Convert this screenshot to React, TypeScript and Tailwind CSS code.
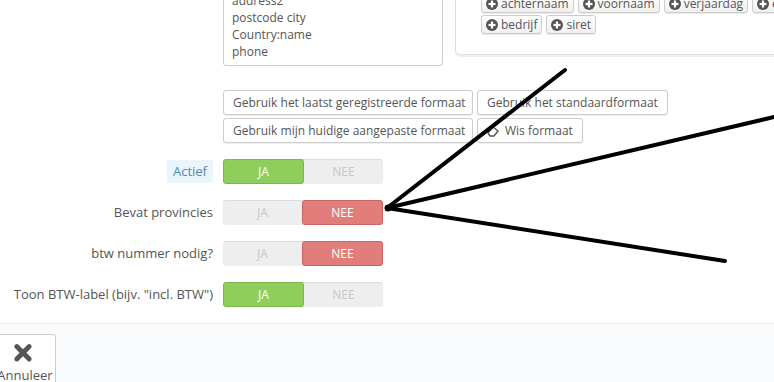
import React from "react";

const font = { fontFamily: '"Open Sans", "Liberation Sans", sans-serif' };

const PlusCircle = () => (
  <svg width="12" height="12" viewBox="0 0 12 12" className="shrink-0">
    <circle cx="6" cy="6" r="6" fill="#555" />
    <rect x="2.5" y="4.9" width="7" height="2.2" fill="#fff" />
    <rect x="4.9" y="2.5" width="2.2" height="7" fill="#fff" />
  </svg>
);

const Eraser = () => (
  <svg width="12" height="12" viewBox="0 0 12 12" className="shrink-0">
    <path d="M1 8 L6 2 L11 6 L7 11 L3 11 Z" fill="none" stroke="#555" strokeWidth="1.4" />
  </svg>
);

const SmallBtn = ({ label }: { label: string }) => (
  <div className="flex h-[19px] shrink-0 items-center gap-[3px] whitespace-nowrap rounded-[3px] border border-[#ccc] bg-gradient-to-b from-white to-[#f0f0f0] px-[4px] text-[12px] leading-none text-[#555] shadow-[0_1px_0_rgba(0,0,0,0.08)]">
    <PlusCircle />
    <span>{label}</span>
  </div>
);

const FormatBtn = ({ label, icon, wide }: { label: string; icon?: boolean; wide?: boolean }) => (
  <div
    className={`flex h-[25px] items-center gap-[6px] whitespace-nowrap rounded-[3px] border border-[#ccc] bg-white px-[9px] text-[12px] text-[#555] shadow-[0_1px_0_rgba(0,0,0,0.06)] ${
      wide ? "w-[250px]" : ""
    }`}
  >
    {icon && <Eraser />}
    <span>{label}</span>
  </div>
);

const Switch = ({ on }: { on: boolean }) => (
  <div className="flex h-[25px] w-[160px] rounded-[3px] bg-[#eeeeee] text-[12px] shadow-[inset_0_1px_1px_rgba(0,0,0,0.08)]">
    <div
      className={`flex flex-1 items-center justify-center rounded-[3px] ${
        on ? "border border-[#7ab848] bg-[#8fcd5d] text-white" : "text-[#c8c8c8]"
      }`}
    >
      JA
    </div>
    <div
      className={`flex flex-1 items-center justify-center rounded-[3px] ${
        !on ? "border border-[#c86464] bg-[#e17d7a] text-white" : "text-[#c8c8c8]"
      }`}
    >
      NEE
    </div>
  </div>
);

const rows = [
  { label: "Actief", on: true, badge: true },
  { label: "Bevat provincies", on: false },
  { label: "btw nummer nodig?", on: false },
  { label: 'Toon BTW-label (bijv. "incl. BTW")', on: true },
];

export default function App() {
  return (
    <div className="relative flex h-[382px] w-[774px] flex-col overflow-hidden bg-white" style={font}>
      <div className="flex h-[323px] shrink-0 flex-col">
        {/* address layout row */}
        <div className="-mt-[30px] ml-[223px] flex items-start gap-[12px]">
          <div className="h-[96px] w-[220px] shrink-0 rounded-[3px] border border-[#ccc] px-[8px] pt-[4px] text-[12px] leading-[17px] text-[#555]">
            <div>address1</div>
            <div>address2</div>
            <div>postcode city</div>
            <div>Country:name</div>
            <div>phone</div>
          </div>
          <div className="h-[85px] w-[360px] shrink-0 rounded-[5px] border border-[#ddd] pl-[25px] pt-[23px] shadow-[0_2px_0_#eee]">
            <div className="flex flex-col gap-[2px]">
              <div className="flex gap-[4px]">
                <SmallBtn label="achternaam" />
                <SmallBtn label="voornaam" />
                <SmallBtn label="verjaardag" />
                <SmallBtn label="e-mail" />
              </div>
              <div className="flex gap-[4px]">
                <SmallBtn label="bedrijf" />
                <SmallBtn label="siret" />
              </div>
            </div>
          </div>
        </div>

        {/* format buttons */}
        <div className="ml-[223px] mt-[24px] flex flex-col gap-[3px]">
          <div className="flex gap-[4px]">
            <FormatBtn label="Gebruik het laatst geregistreerde formaat" wide />
            <FormatBtn label="Gebruik het standaardformaat" />
          </div>
          <div className="flex gap-[4px]">
            <FormatBtn label="Gebruik mijn huidige aangepaste formaat" wide />
            <FormatBtn label="Wis formaat" icon />
          </div>
        </div>

        {/* switches */}
        <div className="mt-[16px] flex flex-col gap-[16px]">
          {rows.map((r) => (
            <div key={r.label} className="flex items-center">
              <div className="flex w-[213px] justify-end text-[13px] text-[#555]">
                {r.badge ? (
                  <span className="flex h-[23px] items-center rounded-[2px] bg-[#eaf4fb] px-[6px] text-[#4f88bb]">{r.label}</span>
                ) : (
                  <span>{r.label}</span>
                )}
              </div>
              <div className="ml-[10px]">
                <Switch on={r.on} />
              </div>
            </div>
          ))}
        </div>
      </div>

      {/* footer */}
      <div className="flex-1 border-t border-[#eee] bg-[#fafbfc] pt-[10px]">
        <div className="-ml-[10px] flex h-[52px] w-[66px] flex-col items-center rounded-[3px] border border-[#ccc] bg-white pt-[8px] text-[13px] text-[#555]">
          <svg width="20" height="20" viewBox="0 0 22 22">
            <path d="M4 4 L18 18 M18 4 L4 18" stroke="#555" strokeWidth="5.5" strokeLinecap="round" />
          </svg>
          <span className="mt-[3px] pl-[4px]">Annuleer</span>
        </div>
      </div>

      {/* hand-drawn arrow */}
      <svg className="pointer-events-none absolute left-0 top-0" width="774" height="382">
        <g stroke="#000" strokeWidth="4" strokeLinecap="round" fill="none">
          <path d="M387 208 L565 70" />
          <path d="M387 208 L774 117" />
          <path d="M387 208 L725 261" />
        </g>
        <circle cx="388" cy="208" r="3.5" fill="#000" />
      </svg>
    </div>
  );
}
